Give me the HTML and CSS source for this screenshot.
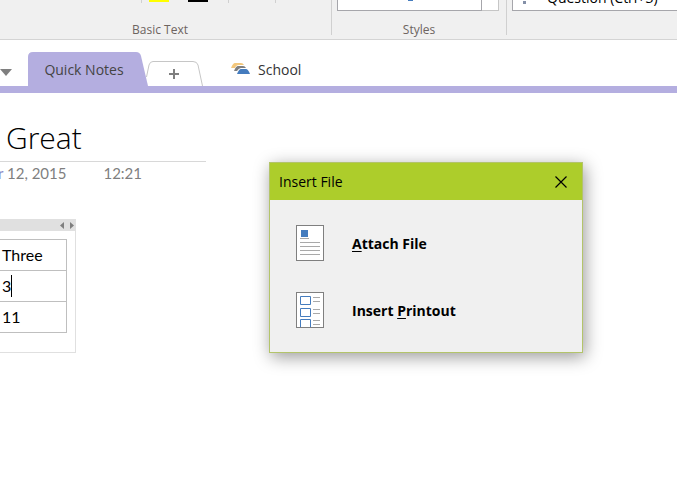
FILE: index.html
```
<!DOCTYPE html>
<html lang="en">
<head>
    <meta charset="UTF-8">
    <meta name="viewport" content="width=device-width, initial-scale=1.0">
    <title>Great - Quick Notes</title>
    <link rel="stylesheet" href="styles.css">
</head>
<body>

    <div class="ribbon">
        <section class="group group-text">
            <div class="group-body text-tools">
                <span class="tool-line"></span>
                <span class="swatch swatch-yellow"></span>
                <span class="swatch swatch-black"></span>
                <span class="tool-line"></span>
                <span class="tool-line tool-line-last"></span>
            </div>
            <div class="group-label">Basic Text</div>
        </section>
        <section class="group group-styles">
            <div class="group-body gallery">
                <div class="gallery-list"><span class="gallery-mark"></span></div>
                <div class="gallery-scroll"></div>
            </div>
            <div class="group-label">Styles</div>
        </section>
        <section class="group group-tags">
            <div class="group-body gallery">
                <div class="tag-list">
                    <span class="tag-mark"></span>
                    <span class="tag-name">Question (Ctrl+3)</span>
                </div>
            </div>
        </section>
    </div>

    <nav class="tabs">
        <svg class="arrow" width="12" height="7" viewBox="0 0 12 7"><path d="M0 0h12L6 7z" fill="#7f7f7f"/></svg>
        <button class="tab tab-active">
            <svg class="tab-shape" width="120" height="34" viewBox="0 0 120 34"><path d="M0 34V5Q0 0 5 0H108Q112 0 113 4L120 34z" fill="#b4aee0"/></svg>
            <span>Quick Notes</span>
        </button>
        <button class="tab tab-new" aria-label="New section">
            <svg width="57" height="25" viewBox="0 0 57 25">
                <path d="M.5 16L3 4Q4 .5 7 .5H47Q51 .5 52 4L56.500 25" fill="#fff" stroke="#c6c6c6"/>
                <path d="M23 13H33M28 8V18" stroke="#7f7f7f" stroke-width="2"/>
            </svg>
        </button>
        <a class="notebook" href="#">
            <svg width="20" height="12" viewBox="0 0 20 12">
                <path d="M0 5Q2 0 4 0H10Q12 0 13 2H8Q5 2 4 5z" fill="#f3c77c"/>
                <path d="M3 8Q5 3 7 3H12Q14 3 15 5H10Q8 5 6 8z" fill="#7f7f7f"/>
                <path d="M6 11Q8 6 10 6H15Q17 6 19 11z" fill="#457cbe"/>
            </svg>
            <span>School</span>
        </a>
    </nav>

    <main class="page">
        <header class="page-head">
            <h1>Great</h1>
        </header>
        <div class="stamp">
            <span><span class="stamp-link">r</span> 12, 2015</span>
            <span>12:21</span>
        </div>

        <div class="note">
            <div class="note-handle">
                <svg width="14" height="7" viewBox="0 0 14 7"><path d="M4 0V7L0 3.500zM10 0V7L14 3.500z" fill="#7f7f7f"/></svg>
            </div>
            <table>
                <tr><td>Three</td></tr>
                <tr><td><span class="caret">3</span></td></tr>
                <tr><td>11</td></tr>
            </table>
        </div>
    </main>

    <div class="dialog" role="dialog" aria-labelledby="dialog-title">
        <div class="dialog-bar">
            <span id="dialog-title">Insert File</span>
            <button class="close" aria-label="Close">
                <svg width="12" height="12" viewBox="0 0 12 12"><path d="M.5 .5l11 11M11.500 .5l-11 11" stroke="#000" stroke-width="1.200"/></svg>
            </button>
        </div>
        <div class="choices">
            <button class="choice">
                <svg width="28" height="36" viewBox="0 0 28 36">
                    <rect x=".5" y=".5" width="27" height="35" fill="#fff" stroke="#7f7f7f"/>
                    <path d="M5 5h7v7H5z" fill="#457cbe"/>
                    <path d="M4 13.500h9M4 17.500h20M4 21.500h20M4 25.500h20M4 29.500h20" stroke="#a9a9a9"/>
                </svg>
                <span><u>A</u>ttach File</span>
            </button>
            <button class="choice">
                <svg width="28" height="36" viewBox="0 0 28 36">
                    <rect x=".5" y=".5" width="27" height="35" fill="#fff" stroke="#7f7f7f"/>
                    <path d="M4.500 4.500h10v8h-10zM4.500 16.500h10v8h-10zM4.500 35V27.500h10V35" fill="none" stroke="#457cbe"/>
                    <path d="M17 5.500h7M17 9.500h7M17 17.500h7M17 21.500h7M17 28.500h7M17 32.500h7" stroke="#a9a9a9"/>
                </svg>
                <span>Insert <u>P</u>rintout</span>
            </button>
        </div>
    </div>

</body>
</html>
```
FILE: styles.css
```
* {
    box-sizing: border-box;
}

body {
    margin: 0;
    background: #fff;
    color: #000;
    font-family: "Open Sans", "Noto Sans", sans-serif;
    font-size: 14px;
    overflow-x: hidden;
}

button {
    padding: 0;
    border: none;
    background: none;
    color: inherit;
    font: inherit;
    cursor: pointer;
}

svg {
    display: block;
    flex: none;
}

/* ribbon */
.ribbon {
    display: flex;
    align-items: flex-start;
    background: #f0f0f0;
    border-bottom: 1px solid #d4d4d4;
    padding-bottom: 4px;
}

.group {
    height: 35px;
    border-right: 1px solid #d0d0d0;
}

.group-text {
    width: 332px;
}

.group-styles {
    width: 175px;
}

.group-tags {
    flex: 1;
    border-right: none;
}

.group-body {
    display: flex;
    height: 11px;
}

.group-label {
    padding-top: 10px;
    color: #6d6460;
    font-size: 12px;
    line-height: 18px;
    text-align: center;
}

.group-text .group-label {
    padding-left: 132px;
    text-align: left;
}

.text-tools {
    padding-left: 141px;
}

.tool-line {
    width: 1px;
    height: 3px;
    margin-right: 46px;
    background: #d0d0d0;
}

.tool-line:first-child {
    margin-right: 7px;
}

.tool-line-last {
    margin-right: 0;
}

.swatch {
    width: 20px;
    height: 2px;
    margin-right: 20px;
}

.swatch-yellow {
    margin-right: 19px;
    background: #ff0;
}

.swatch-black {
    background: #000;
}

.gallery {
    padding: 0 7px 0 5px;
}

.gallery-list {
    flex: 1;
    background: #fff;
    border: 1px solid #a6a6ab;
    border-top: none;
}

.gallery-mark {
    display: block;
    width: 5px;
    height: 1px;
    margin-left: 70px;
    background: #457cbe;
}

.gallery-scroll {
    width: 17px;
    background: #fff;
    border: 1px solid #c6c6c6;
    border-width: 0 1px 1px 0;
}

.group-tags .gallery {
    padding-right: 0;
}

.tag-list {
    display: flex;
    align-items: flex-end;
    flex: 1;
    background: #fff;
    border: 1px solid #a6a6ab;
    border-width: 0 0 1px 1px;
}

.tag-mark {
    width: 3px;
    height: 3px;
    margin: 0 21px 6px 10px;
    background: #8490a8;
}

.tag-name {
    padding-bottom: 3px;
    line-height: 18px;
    white-space: nowrap;
}

/* section tabs */
.tabs {
    display: flex;
    align-items: flex-end;
    height: 53px;
    border-bottom: 7px solid #b4aee0;
}

.arrow {
    margin: 0 16px 10px 0;
}

.tab-active {
    position: relative;
    width: 118px;
    height: 34px;
    padding: 0 6px 0 0;
    color: #444;
}

.tab-active span {
    position: relative;
}

.tab-shape {
    position: absolute;
    top: 0;
    left: 0;
}

.notebook {
    display: flex;
    align-items: center;
    gap: 7px;
    height: 34px;
    margin-left: 28px;
    color: #333;
    text-decoration: none;
}

/* note page */
.page {
    padding-top: 26px;
    font-family: Lato, "Open Sans", sans-serif;
}

.page-head {
    width: 206px;
    border-bottom: 1px solid #d8d8d8;
}

h1 {
    margin: 0;
    padding: 0 0 4px 6px;
    font-family: "Open Sans", sans-serif;
    font-size: 30px;
    font-weight: 300;
    line-height: 38px;
}

/* the page is scrolled sideways, so the date starts past the left edge */
.stamp {
    display: flex;
    gap: 37px;
    margin-left: -2px;
    color: #7f7f7f;
    font-size: 15px;
    line-height: 22px;
}

.stamp-link {
    color: #8c8cc8;
}

.note {
    width: 76px;
    height: 134px;
    margin-top: 35px;
    border: 1px solid #e0e0e0;
    border-width: 0 1px 1px 0;
}

.note-handle {
    display: flex;
    justify-content: flex-end;
    align-items: center;
    height: 12px;
    padding-right: 1px;
    background: #e0e0e0;
}

table {
    width: 67px;
    margin-top: 8px;
    border-collapse: collapse;
    font-size: 16px;
    line-height: 22px;
}

td {
    height: 31px;
    padding: 0 0 0 2px;
    border: 1px solid #bfbfbf;
    border-left: none;
}

.caret {
    display: inline-block;
    border-right: 1px solid #000;
}

/* insert dialog */
.dialog {
    position: absolute;
    top: 162px;
    left: 269px;
    width: 314px;
    background: #f0f0f0;
    border: 1px solid #b3c46a;
    box-shadow: 2px 4px 16px rgba(0, 0, 0, 0.4);
}

.dialog-bar {
    display: flex;
    justify-content: space-between;
    align-items: center;
    height: 37px;
    padding: 0 15px 0 9px;
    background: #adcd2b;
}

.choices {
    display: flex;
    flex-direction: column;
    gap: 31px;
    padding: 25px 26px 24px;
}

.choice {
    display: flex;
    align-items: center;
    gap: 28px;
    font-weight: 700;
}

.choice u {
    text-underline-offset: 2px;
}
```
